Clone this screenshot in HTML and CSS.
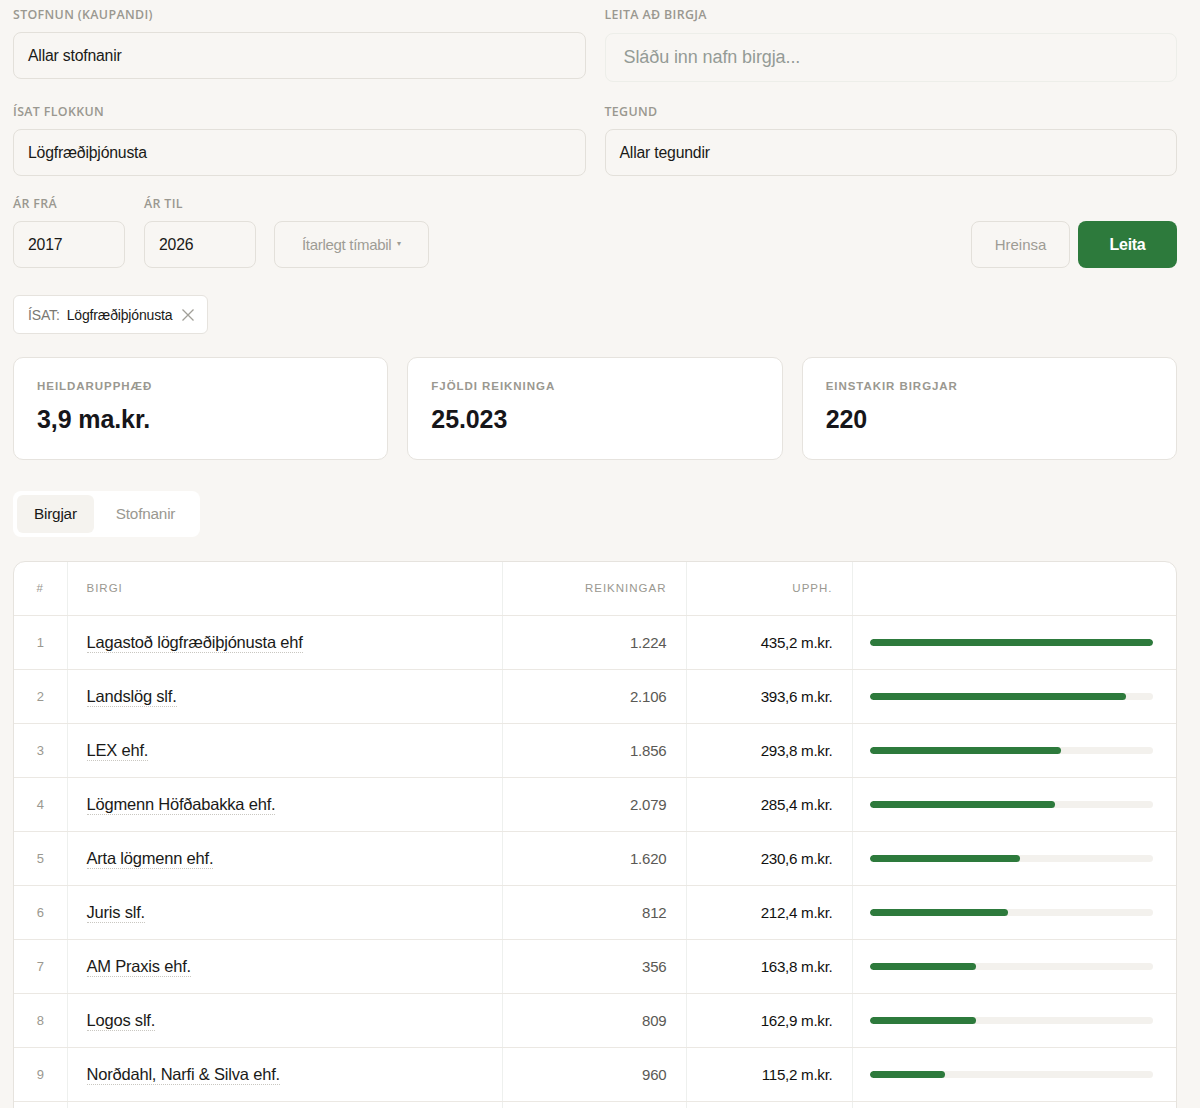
FILE: index.html
```html
<!DOCTYPE html>
<html lang="is">
<head>
<meta charset="utf-8">
<title>Reikningar</title>
<link rel="stylesheet" href="styles.css">
</head>
<body>
<div class="page">
  <div class="filters">
    <div class="field">
      <div class="flabel">Stofnun (kaupandi)</div>
      <div class="input">Allar stofnanir</div>
    </div>
    <div class="field">
      <div class="flabel">Leita að birgja</div>
      <div class="input search">Sláðu inn nafn birgja...</div>
    </div>
    <div class="field">
      <div class="flabel">ÍSAT flokkun</div>
      <div class="input">Lögfræðiþjónusta</div>
    </div>
    <div class="field">
      <div class="flabel">Tegund</div>
      <div class="input">Allar tegundir</div>
    </div>
  </div>

  <div class="yearrow">
    <div class="field year">
      <div class="flabel">Ár frá</div>
      <div class="input">2017</div>
    </div>
    <div class="field year">
      <div class="flabel">Ár til</div>
      <div class="input">2026</div>
    </div>
    <div class="btn ghost advanced">Ítarlegt tímabil <span class="caret">▾</span></div>
    <div class="spacer"></div>
    <div class="btn ghost clear">Hreinsa</div>
    <div class="btn primary">Leita</div>
  </div>

  <div class="chips">
    <div class="chip"><span class="chipkey">ÍSAT:</span> <span class="chipval">Lögfræðiþjónusta</span>
      <svg class="x" width="14" height="14" viewBox="0 0 14 14"><path d="M1.5 1.5L12.5 12.5M12.5 1.5L1.5 12.5" stroke="#a19f98" stroke-width="1.3" fill="none"/></svg>
    </div>
  </div>

  <div class="stats">
    <div class="stat"><div class="slabel">Heildarupphæð</div><div class="svalue">3,9 ma.kr.</div></div>
    <div class="stat"><div class="slabel">Fjöldi reikninga</div><div class="svalue">25.023</div></div>
    <div class="stat"><div class="slabel">Einstakir birgjar</div><div class="svalue">220</div></div>
  </div>

  <div class="tabs">
    <div class="tab active">Birgjar</div>
    <div class="tab">Stofnanir</div>
  </div>

  <div class="tablewrap">
    <table class="tbl">
      <colgroup>
        <col class="c-num"><col class="c-name"><col class="c-cnt"><col class="c-amt"><col class="c-bar">
      </colgroup>
      <thead>
        <tr><th class="num">#</th><th class="name">Birgi</th><th class="r">Reikningar</th><th class="r">Upph.</th><th></th></tr>
      </thead>
      <tbody>
        <tr><td class="num">1</td><td class="name"><span class="nm">Lagastoð lögfræðiþjónusta ehf</span></td><td class="r cnt">1.224</td><td class="r amt">435,2 m.kr.</td><td class="barc"><div class="track"><div class="fill" style="width:100%"></div></div></td></tr>
        <tr><td class="num">2</td><td class="name"><span class="nm">Landslög slf.</span></td><td class="r cnt">2.106</td><td class="r amt">393,6 m.kr.</td><td class="barc"><div class="track"><div class="fill" style="width:90.4%"></div></div></td></tr>
        <tr><td class="num">3</td><td class="name"><span class="nm">LEX ehf.</span></td><td class="r cnt">1.856</td><td class="r amt">293,8 m.kr.</td><td class="barc"><div class="track"><div class="fill" style="width:67.5%"></div></div></td></tr>
        <tr><td class="num">4</td><td class="name"><span class="nm">Lögmenn Höfðabakka ehf.</span></td><td class="r cnt">2.079</td><td class="r amt">285,4 m.kr.</td><td class="barc"><div class="track"><div class="fill" style="width:65.6%"></div></div></td></tr>
        <tr><td class="num">5</td><td class="name"><span class="nm">Arta lögmenn ehf.</span></td><td class="r cnt">1.620</td><td class="r amt">230,6 m.kr.</td><td class="barc"><div class="track"><div class="fill" style="width:53%"></div></div></td></tr>
        <tr><td class="num">6</td><td class="name"><span class="nm">Juris slf.</span></td><td class="r cnt">812</td><td class="r amt">212,4 m.kr.</td><td class="barc"><div class="track"><div class="fill" style="width:48.8%"></div></div></td></tr>
        <tr><td class="num">7</td><td class="name"><span class="nm">AM Praxis ehf.</span></td><td class="r cnt">356</td><td class="r amt">163,8 m.kr.</td><td class="barc"><div class="track"><div class="fill" style="width:37.6%"></div></div></td></tr>
        <tr><td class="num">8</td><td class="name"><span class="nm">Logos slf.</span></td><td class="r cnt">809</td><td class="r amt">162,9 m.kr.</td><td class="barc"><div class="track"><div class="fill" style="width:37.4%"></div></div></td></tr>
        <tr><td class="num">9</td><td class="name"><span class="nm">Norðdahl, Narfi &amp; Silva ehf.</span></td><td class="r cnt">960</td><td class="r amt">115,2 m.kr.</td><td class="barc"><div class="track"><div class="fill" style="width:26.5%"></div></div></td></tr>
        <tr><td class="num">10</td><td class="name"><span class="nm">Lögmannsstofa ehf.</span></td><td class="r cnt">512</td><td class="r amt">98,4 m.kr.</td><td class="barc"><div class="track"><div class="fill" style="width:22.6%"></div></div></td></tr>
      </tbody>
    </table>
  </div>
</div>
</body>
</html>
```

FILE: styles.css
```css
* { box-sizing: border-box; }
html, body { margin: 0; padding: 0; }
body {
  background: #f8f6f3;
  font-family: "Liberation Sans", Arial, sans-serif;
  color: #1a1a18;
  overflow: hidden;
}
.page {
  padding: 7px 23px 0 13px;
}
.filters {
  display: grid;
  grid-template-columns: 1fr 1fr;
  column-gap: 19px;
  row-gap: 25px;
}
.field { display: flex; flex-direction: column; }
.flabel {
  font-family: "Open Sans", sans-serif;
  font-weight: 600;
  font-size: 12.4px;
  line-height: 16px;
  letter-spacing: 0.35px;
  text-transform: uppercase;
  color: #9a9890;
  margin-bottom: 9px;
}
.input {
  height: 47px;
  border: 1px solid #e3e0da;
  border-radius: 8px;
  background: #f8f6f3;
  padding: 0 14px;
  display: flex;
  align-items: center;
  font-size: 15.8px;
  letter-spacing: -0.2px;
  color: #1a1a18;
}
.input.search {
  height: 49px;
  margin-top: 1px;
  margin-bottom: -3px;
  border-color: #edeee9;
  font-size: 18px;
  padding: 0 18px;
  color: #949b96;
  letter-spacing: -0.1px;
}
.yearrow {
  display: flex;
  align-items: flex-end;
  margin-top: 20px;
}
.field.year { width: 112px; margin-right: 19px; }
.btn {
  height: 47px;
  border-radius: 8px;
  display: flex;
  align-items: center;
  justify-content: center;
  font-size: 15px;
}
.btn.ghost {
  border: 1px solid #e3e0da;
  color: #9e9c95;
  background: #f8f6f3;
}
.advanced { width: 155px; margin-left: -1px; letter-spacing: -0.3px; }
.caret { font-size: 8px; margin-left: 6px; color: #9e9c95; position: relative; top: -1px; }
.spacer { flex: 1; }
.clear { width: 99px; margin-right: 8px; }
.btn.primary {
  width: 99px;
  background: #2d7a3c;
  color: #fff;
  font-weight: bold;
  font-size: 16px;
  letter-spacing: -0.3px;
}
.chips { margin-top: 27px; display: flex; }
.chip {
  height: 39px;
  background: #fff;
  border: 1px solid #e6e3de;
  border-radius: 6px;
  display: flex;
  align-items: center;
  padding: 0 12px 0 14px;
  font-size: 14px;
  letter-spacing: -0.15px;
}
.chipkey { color: #7a7872; margin-right: 7px; }
.chipval { color: #1a1a18; }
.chip .x { margin-left: 9px; }
.stats {
  margin-top: 23px;
  display: grid;
  grid-template-columns: 1fr 1fr 1fr;
  column-gap: 19px;
}
.stat {
  height: 103px;
  background: #fff;
  border: 1px solid #e6e3de;
  border-radius: 10px;
  padding: 21px 23px;
}
.slabel {
  font-size: 11.5px;
  font-weight: bold;
  letter-spacing: 0.95px;
  text-transform: uppercase;
  color: #9a9890;
  line-height: 14px;
}
.svalue {
  margin-top: 11px;
  font-size: 25px;
  font-weight: bold;
  letter-spacing: -0.1px;
  color: #16161a;
  line-height: 30px;
}
.tabs {
  margin-top: 31px;
  display: inline-flex;
  background: #fff;
  border-radius: 8px;
  padding: 4px;
  height: 46px;
  width: 187px;
}
.tab {
  height: 38px;
  padding: 0 17px;
  display: flex;
  align-items: center;
  font-size: 15.3px;
  color: #9a9890;
  border-radius: 6px;
  letter-spacing: -0.2px;
}
.tab.active { background: #f5f3ef; color: #1a1a18; margin-right: 5px; }
.tablewrap {
  margin-top: 24px;
  background: #fff;
  border: 1px solid #e6e3de;
  border-radius: 12px;
  overflow: hidden;
}
.tbl {
  width: 100%;
  border-collapse: collapse;
  table-layout: fixed;
}
.c-num { width: 53px; }
.c-name { width: 435px; }
.c-cnt { width: 184px; }
.c-amt { width: 166px; }
.tbl th, .tbl td {
  height: 54px;
  border-bottom: 1px solid #ebe8e3;
  border-right: 1px solid #eef0ee;
  padding: 0 19px 0 19px;
}
.tbl th:last-child, .tbl td:last-child { border-right: none; }
.tbl th {
  font-size: 11.5px;
  font-weight: normal;
  letter-spacing: 1px;
  text-transform: uppercase;
  color: #9a9890;
  text-align: left;
  height: 53px;
}
.tbl th.num, .tbl td.num { text-align: center; padding: 0; }
.tbl td.num { font-size: 13px; color: #9a9890; }
.tbl .r { text-align: right; }
.tbl td.name { padding-left: 19px; }
.nm {
  font-size: 16.5px;
  letter-spacing: -0.2px;
  color: #1a1a18;
  border-bottom: 1px dotted #c9c7c1;
  padding-bottom: 1px;
}
.cnt { font-size: 15px; color: #5a5955; letter-spacing: -0.2px; }
.amt { font-size: 15.2px; color: #111110; letter-spacing: -0.3px; }
.tbl td.barc { padding: 0 23px 0 17px; }
.track {
  height: 7px;
  background: #f3f1ed;
  border-radius: 4px;
  overflow: hidden;
}
.fill {
  height: 100%;
  background: #2d7a3c;
  border-radius: 4px;
}
```
